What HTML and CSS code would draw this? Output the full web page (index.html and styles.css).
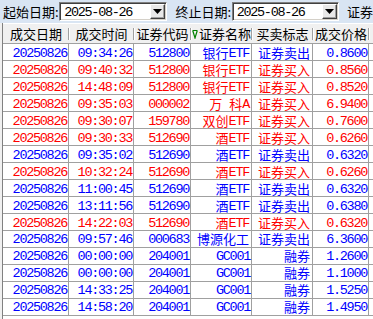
FILE: index.html
```html
<!DOCTYPE html>
<html lang="zh">
<head>
<meta charset="utf-8">
<link rel="stylesheet" href="styles.css">
</head>
<body>
<div class="toolbar">
  <span class="lbl">起始日期:</span>
  <div class="combo"><span class="val">2025-08-26</span><span class="btn"><svg width="9" height="5" viewBox="0 0 9 5"><path d="M0 0H9L4.5 5Z" fill="#000"/></svg></span></div>
  <span class="lbl lbl2">终止日期:</span>
  <div class="combo"><span class="val">2025-08-26</span><span class="btn"><svg width="9" height="5" viewBox="0 0 9 5"><path d="M0 0H9L4.5 5Z" fill="#000"/></svg></span></div>
  <span class="lbl lbl3">证券</span>
</div>
<div class="table">
  <div class="head">
    <div class="hc">成交日期</div>
    <div class="hc">成交时间</div>
    <div class="hc">证券代码</div>
    <div class="hc"><svg class="sort" width="6" height="10" viewBox="0 0 6 10"><path d="M0.5 1.5H5.5M0.8 1.8L3 9L5.2 1.8" stroke="#008000" stroke-width="1.2" fill="none"/></svg>证券名称</div>
    <div class="hc">买卖标志</div>
    <div class="hc">成交价格</div>
  </div>
  <div class="row blue"><div>20250826</div><div>09:34:26</div><div>512800</div><div class="cn"><span>银行</span><span class="lat">ETF</span></div><div class="cn">证券卖出</div><div>0.8600</div></div>
  <div class="row red"><div>20250826</div><div>09:40:32</div><div>512800</div><div class="cn"><span>银行</span><span class="lat">ETF</span></div><div class="cn">证券买入</div><div>0.8560</div></div>
  <div class="row red"><div>20250826</div><div>14:48:09</div><div>512800</div><div class="cn"><span>银行</span><span class="lat">ETF</span></div><div class="cn">证券买入</div><div>0.8520</div></div>
  <div class="row red"><div>20250826</div><div>09:35:03</div><div>000002</div><div class="cn"><span>万</span><span class="lat">&nbsp;</span><span>科</span><span class="lat">A</span></div><div class="cn">证券买入</div><div>6.9400</div></div>
  <div class="row red"><div>20250826</div><div>09:30:07</div><div>159780</div><div class="cn"><span>双创</span><span class="lat">ETF</span></div><div class="cn">证券买入</div><div>0.7600</div></div>
  <div class="row red"><div>20250826</div><div>09:30:33</div><div>512690</div><div class="cn"><span>酒</span><span class="lat">ETF</span></div><div class="cn">证券买入</div><div>0.6260</div></div>
  <div class="row blue"><div>20250826</div><div>09:35:02</div><div>512690</div><div class="cn"><span>酒</span><span class="lat">ETF</span></div><div class="cn">证券卖出</div><div>0.6320</div></div>
  <div class="row red"><div>20250826</div><div>10:32:24</div><div>512690</div><div class="cn"><span>酒</span><span class="lat">ETF</span></div><div class="cn">证券买入</div><div>0.6260</div></div>
  <div class="row blue"><div>20250826</div><div>11:00:45</div><div>512690</div><div class="cn"><span>酒</span><span class="lat">ETF</span></div><div class="cn">证券卖出</div><div>0.6320</div></div>
  <div class="row blue"><div>20250826</div><div>13:11:56</div><div>512690</div><div class="cn"><span>酒</span><span class="lat">ETF</span></div><div class="cn">证券卖出</div><div>0.6380</div></div>
  <div class="row red"><div>20250826</div><div>14:22:03</div><div>512690</div><div class="cn"><span>酒</span><span class="lat">ETF</span></div><div class="cn">证券买入</div><div>0.6320</div></div>
  <div class="row blue"><div>20250826</div><div>09:57:46</div><div>000683</div><div class="cn">博源化工</div><div class="cn">证券卖出</div><div>6.3600</div></div>
  <div class="row blue"><div>20250826</div><div>00:00:00</div><div>204001</div><div>GC001</div><div class="cn">融券</div><div>1.2600</div></div>
  <div class="row blue"><div>20250826</div><div>00:00:00</div><div>204001</div><div>GC001</div><div class="cn">融券</div><div>1.1000</div></div>
  <div class="row blue"><div>20250826</div><div>14:33:25</div><div>204001</div><div>GC001</div><div class="cn">融券</div><div>1.5250</div></div>
  <div class="row blue"><div>20250826</div><div>14:58:20</div><div>204001</div><div>GC001</div><div class="cn">融券</div><div>1.4950</div></div>
</div>
</body>
</html>
```

FILE: styles.css
```css
html, body {
  margin: 0;
  padding: 0;
  width: 373px;
  height: 319px;
  overflow: hidden;
  background: #f0f0f0;
}
body {
  font-family: "Liberation Mono", "Noto Sans CJK SC", monospace;
  font-size: 13px;
}
.toolbar {
  height: 23px;
  background: #d9e5f3;
  display: flex;
  align-items: center;
  white-space: nowrap;
}
.lbl {
  font-family: "Noto Sans CJK SC", sans-serif;
  font-size: 13px;
  line-height: 16px;
  color: #000;
  margin-left: 3px;
  width: 57px;
}
.lbl2 { margin-left: 9px; }
.lbl3 { margin-left: 8px; width: auto; }
.combo {
  width: 105px;
  height: 15px;
  background: #fff;
  border: 1px solid;
  border-color: #808080 #fff #fff #808080;
  box-shadow: inset 1px 1px 0 #404040, inset -1px -1px 0 #d4d0c8;
  display: flex;
  align-items: center;
  justify-content: space-between;
  padding: 1px;
}
.val {
  font-family: "Liberation Mono", monospace;
  font-size: 13.5px;
  letter-spacing: -1.3px;
  padding-left: 3px;
  padding-top: 1px;
}
.btn {
  width: 15px;
  height: 15px;
  box-sizing: border-box;
  background: #e8e8e8;
  border: 1px solid;
  border-color: #fff #404040 #404040 #fff;
  box-shadow: inset -1px -1px 0 #a0a0a0;
  display: flex;
  align-items: center;
  justify-content: center;
}
.table {
  margin-left: 2px;
  border-left: 1px solid #808080;
  background: #fff;
  height: 300px;
}
.head, .row {
  display: grid;
  grid-template-columns: 66px 65px 57px 61px 61px 56px;
}
.head {
  height: 19px;
  background: #f0f0f0;
  border-bottom: 1px solid #a0a0a0;
  border-top: 1px solid #fff;
}
.hc {
  font-family: "Noto Sans CJK SC", sans-serif;
  font-size: 13px;
  line-height: 19px;
  color: #000;
  display: flex;
  align-items: center;
  justify-content: center;
  position: relative;
  white-space: nowrap;
}
.hc::after {
  content: "";
  position: absolute;
  right: 0;
  top: 4px;
  height: 12px;
  width: 1px;
  background: #a0a0a0;
  box-shadow: 1px 0 0 #fff;
}
.sort {
  margin-right: 1px;
  flex: none;
}
.row {
  height: 16px;
  border-bottom: 1px solid #a0a0a0;
  background: #fff;
}
.row > div {
  box-sizing: border-box;
  border-right: 1px solid #a0a0a0;
  display: flex;
  align-items: center;
  justify-content: flex-end;
  font-size: 13.5px;
  line-height: 14px;
  letter-spacing: -1.3px;
  padding: 2px 1px 0 0;
  white-space: nowrap;
}
.row > div.cn {
  font-family: "Noto Sans CJK SC", sans-serif;
  font-size: 13px;
  letter-spacing: 0;
  padding: 0 2px 1px 0;
}
.row > div.cn > span {
  line-height: 15px;
}
.row > div.cn > .lat {
  font-family: "Liberation Mono", monospace;
  font-size: 13.5px;
  letter-spacing: -1.3px;
  padding-top: 2px;
}
.red { color: #ff0000; }
.blue { color: #0000ff; }
```
